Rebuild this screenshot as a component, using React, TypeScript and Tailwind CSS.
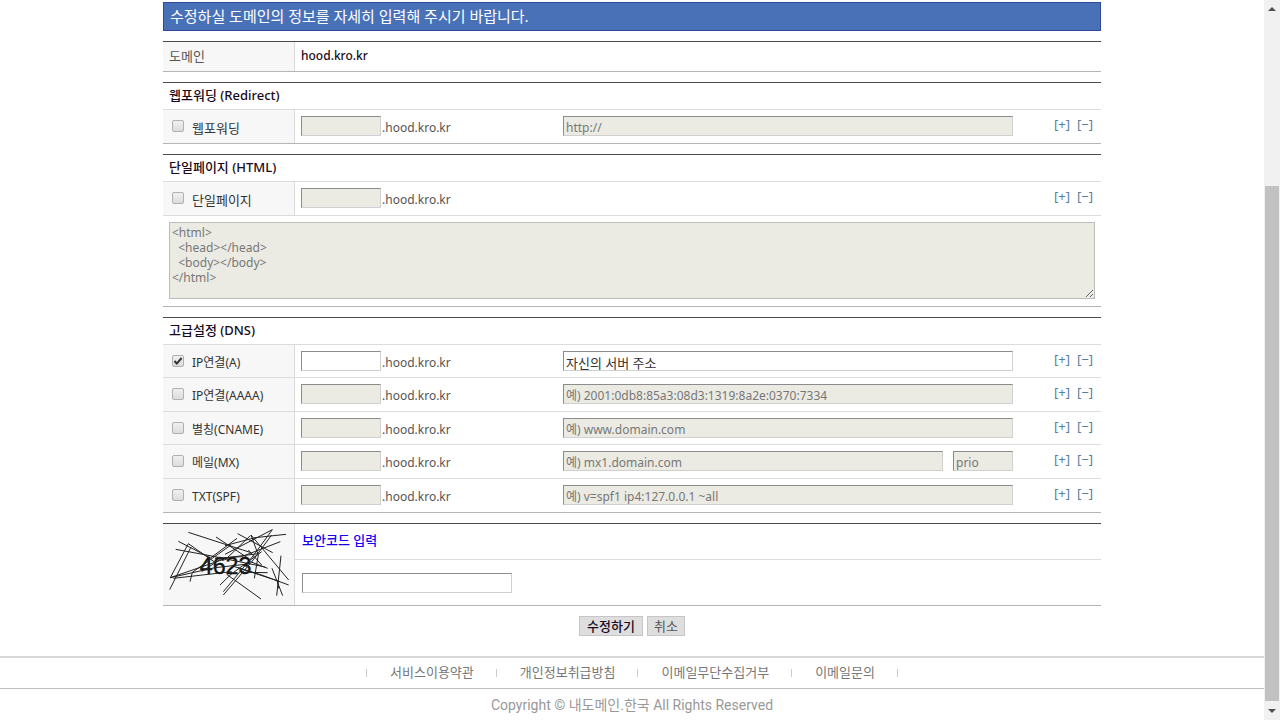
import { useState } from "react";

const DOMAIN = "hood.kro.kr";

const dnsRecords = [
  { id: "a", label: "IP연결(A)", hint: "자신의 서버 주소", enabled: true },
  { id: "aaaa", label: "IP연결(AAAA)", hint: "예) 2001:0db8:85a3:08d3:1319:8a2e:0370:7334" },
  { id: "cname", label: "별칭(CNAME)", hint: "예) www.domain.com" },
  { id: "mx", label: "메일(MX)", hint: "예) mx1.domain.com", prio: true },
  { id: "txt", label: "TXT(SPF)", hint: "예) v=spf1 ip4:127.0.0.1 ~all" },
];

const footerLinks = ["서비스이용약관", "개인정보취급방침", "이메일무단수집거부", "이메일문의"];

const page = "<html>\n  <head></head>\n  <body></body>\n</html>";

const field =
  "h-5 min-w-0 border border-t-[#8c8c8c] border-l-[#8c8c8c] border-r-[#d0d0d0] border-b-[#d0d0d0] bg-white px-[2px] pt-[2px] leading-4 text-[#333] disabled:bg-[#ebebe4] disabled:text-[#777]";

function Section({ children }: { children: React.ReactNode }) {
  return <section className="mt-[10px] border-t border-b border-t-[#4a4a4a] border-b-[#b5b5b5]">{children}</section>;
}

function SectionTitle({ children }: { children: React.ReactNode }) {
  return (
    <h2 className="h-[27px] border-b border-[#dcdcdc] pl-[6px] text-[13px] leading-6 font-medium text-[#1a0a20]">
      {children}
    </h2>
  );
}

type RecordRowProps = {
  id: string;
  label: string;
  hint?: string;
  prio?: boolean;
  enabled?: boolean;
};

function RecordRow({ id, label, hint, prio, enabled = false }: RecordRowProps) {
  const [on, setOn] = useState(enabled);
  // labels with latin letters run wider, so they are set one size down
  const labelSize = /[A-Z]/.test(label) ? "text-xs" : "text-[13px]";
  const hintSize = on ? "text-[13px]" : "text-xs";

  return (
    <div className="flex min-h-[33px] border-b border-[#dcdcdc] even:min-h-[34px] last:border-b-0">
      <div className="flex w-[132px] shrink-0 items-start border-r border-[#d8d8d8] bg-[#f7f7f7] pt-[6px] pl-[9px]">
        <span className="relative mt-1 flex">
          <input
            id={id}
            type="checkbox"
            checked={on}
            onChange={(e) => setOn(e.target.checked)}
            className="h-3 w-3 appearance-none rounded-xs border border-[#b0b0b0] bg-linear-to-b from-[#f0f0f0] to-[#dcdcdc]"
          />
          {on && (
            <svg viewBox="0 0 12 12" className="pointer-events-none absolute inset-0 h-3 w-3" aria-hidden="true">
              <path d="M2.5 6l2.3 2.6L9.6 3" fill="none" stroke="#333" strokeWidth="2" />
            </svg>
          )}
        </span>
        <label htmlFor={id} className={`${labelSize} pl-2 leading-6 text-[#333]`}>
          {label}
        </label>
      </div>
      <div className="flex w-[268px] shrink-0 items-start pt-[6px] pl-[6px] text-xs">
        <input aria-label={`${label} ${DOMAIN}`} disabled={!on} className={`${field} w-20`} />
        <span className="pl-px leading-6 text-[#555]">.{DOMAIN}</span>
      </div>
      <div className="flex-1 pt-[6px]">
        {hint && (
          <div className={`${hintSize} flex max-w-[450px] gap-[10px]`}>
            <input aria-label={label} disabled={!on} defaultValue={hint} className={`${field} flex-1`} />
            {prio && <input aria-label="prio" disabled={!on} defaultValue="prio" className={`${field} w-[60px]`} />}
          </div>
        )}
      </div>
      <div className="flex shrink-0 gap-[7px] pt-[6px] pr-2 leading-4 text-[#5580a0]">
        <a href="#add">[+]</a>
        <a href="#remove">[−]</a>
      </div>
    </div>
  );
}

function Captcha() {
  return (
    <svg viewBox="12 9 360 216" className="h-[72px] w-[120px]" role="img" aria-label="보안코드">
      <text x="104" y="147" fontSize="70" fontFamily="Liberation Sans, sans-serif" fill="#111" stroke="#111" strokeWidth="1">
        4623
      </text>
      <g stroke="#222" strokeWidth="3" fill="none">
        <path d="M70 22L255 82M40 49L135 98M32 73L135 92L300 126M70 56L16 158M78 66L14 194M70 56L150 112" />
        <path d="M16 158L150 128L240 118M25 160L200 140M16 158L190 98M75 170L82 142L198 60M153 36L250 100" />
        <path d="M322 14L180 88M322 14L265 92L175 200M363 28L270 38L180 62M346 50L230 95L150 100" />
        <path d="M218 26L323 83M258 30L371 165M371 180L290 150L220 128M200 122L345 170" />
        <path d="M348 92L335 212M321 130L353 212M338 168L341 190M185 148L288 222M175 210L262 108L320 30" />
        <path d="M165 180L198 148L290 80M258 30L280 90L268 160M256 110L308 130M240 142L308 143" />
        <path d="M216 40L135 100M256 32L180 105M110 140L170 100L280 86M250 75L290 120" />
      </g>
    </svg>
  );
}

function Scrollbar() {
  return (
    <div className="sticky top-0 flex h-screen w-4 shrink-0 flex-col items-center bg-[#f1f1f1] py-[5px]" aria-hidden="true">
      <svg viewBox="0 0 8 4" className="mt-[2px] h-1 w-2">
        <path d="M0 4L4 0L8 4z" fill="#505050" />
      </svg>
      <div className="flex w-full flex-1 flex-col px-px pt-[175px] pb-[8px]">
        <div className="w-full flex-1 bg-[#c1c1c1]" />
      </div>
      <svg viewBox="0 0 8 4" className="mb-[2px] h-1 w-2">
        <path d="M0 0L4 4L8 0z" fill="#505050" />
      </svg>
    </div>
  );
}

export default function App() {
  return (
    <div className="flex min-h-screen bg-white font-['Noto_Sans','Noto_Sans_CJK_KR',sans-serif] text-[13px]">
      <div className="min-w-0 flex-1">
        <form className="mx-auto max-w-[938px] pt-[2px]" onSubmit={(e) => e.preventDefault()}>
          <h1 className="h-[29px] border border-[#30489c] bg-[#4971b7] pl-[6px] text-[15px] leading-[27px] text-white">
            수정하실 도메인의 정보를 자세히 입력해 주시기 바랍니다.
          </h1>

          <Section>
            <div className="flex min-h-[29px] leading-[28px]">
              <span className="w-[132px] shrink-0 border-r border-[#d8d8d8] bg-[#f7f7f7] pl-[6px] text-[#555]">도메인</span>
              <span className="pl-[6px] text-xs leading-[28px] font-medium text-[#1a0a20]">{DOMAIN}</span>
            </div>
          </Section>

          <Section>
            <SectionTitle>웹포워딩 (Redirect)</SectionTitle>
            <div>
              <RecordRow id="redirect" label="웹포워딩" hint="http://" />
            </div>
          </Section>

          <Section>
            <SectionTitle>단일페이지 (HTML)</SectionTitle>
            <div>
              <RecordRow id="html" label="단일페이지" />
            </div>
            <div className="flex border-t border-[#dcdcdc] px-[6px] pt-[6px] pb-[7px]">
              <textarea
                aria-label="단일페이지 HTML"
                disabled
                defaultValue={page}
                className="h-[77px] w-full border border-[#bcbcbc] bg-[#ebebe4] p-[2px] text-xs leading-[15px] text-[#777]"
              />
            </div>
          </Section>

          <Section>
            <SectionTitle>고급설정 (DNS)</SectionTitle>
            <div>
              {dnsRecords.map((r) => (
                <RecordRow key={r.id} {...r} />
              ))}
            </div>
          </Section>

          <Section>
            <div className="flex">
              <div className="w-[132px] shrink-0 border-r border-[#d8d8d8] bg-[#f7f7f7] px-[6px] pt-1 pb-[5px]">
                <Captcha />
              </div>
              <div className="flex-1">
                <label htmlFor="code" className="block h-9 border-b border-[#dcdcdc] pl-[7px] leading-[33px] font-medium text-[#1500f0]">
                  보안코드 입력
                </label>
                <div className="pt-[13px] pl-[7px]">
                  <input id="code" className={`${field} block w-[210px]`} />
                </div>
              </div>
            </div>
          </Section>

          <div className="mt-[10px] flex justify-center gap-1">
            <button type="submit" className="h-5 border border-[#c6c6c6] bg-[#dedede] px-[7px] leading-4 font-medium text-[#1a0a20]">
              수정하기
            </button>
            <button type="button" className="h-5 border border-[#c6c6c6] bg-[#dedede] px-[6px] leading-4 text-[#555]">
              취소
            </button>
          </div>
        </form>

        <footer className="mt-5 border-t-2 border-[#d8d8d8] text-center">
          <nav className="flex h-[31px] items-center justify-center gap-[23px] border-b border-[#c0c0c0] pb-px text-[#777]">
            <span className="h-2 w-px bg-[#ccc]" />
            {footerLinks.map((text) => (
              <div key={text} className="flex items-center gap-[22px]">
                <a href="#policy">{text}</a>
                <span className="h-2 w-px bg-[#ccc]" />
              </div>
            ))}
          </nav>
          <p className="pt-[6px] font-['Roboto','Noto_Sans_CJK_KR',sans-serif] text-sm leading-5 text-[#999]">
            Copyright © 내도메인.한국 All Rights Reserved
          </p>
        </footer>
      </div>
      <Scrollbar />
    </div>
  );
}
